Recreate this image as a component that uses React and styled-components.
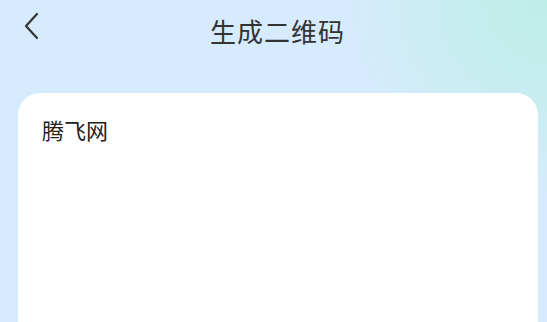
import styled, { createGlobalStyle } from "styled-components"

const Global = createGlobalStyle`
  html, body { margin: 0; padding: 0; }
  body {
    font-family: "Noto Sans CJK SC", "Noto Sans", sans-serif;
    background: #d6ebfd;
  }
`

function App() {
    return (
        <Page>
            <Global />
            <Header>
                <Back aria-label="back">
                    <svg width="16" height="28" viewBox="0 0 16 28">
                        <path d="M13 2 L2 14 L13 26" fill="none" stroke="#333" strokeWidth="2.2" strokeLinecap="round" strokeLinejoin="round" />
                    </svg>
                </Back>
                <Title>生成二维码</Title>
            </Header>
            <Card>
                <Content>腾飞网</Content>
            </Card>
        </Page>
    )
}

const Page = styled.div`
  width: 547px;
  height: 322px;
  overflow: hidden;
  display: flex;
  flex-direction: column;
  background:
    radial-gradient(circle at 100% 0%, #bdeee6 0, rgba(189,238,230,0.6) 90px, rgba(214,235,253,0) 200px),
    #d6ebfd;
`

const Header = styled.header`
  position: relative;
  height: 60px;
  display: flex;
  align-items: center;
  justify-content: center;
`

const Back = styled.button`
  position: absolute;
  left: 24px;
  top: 12px;
  padding: 0;
  border: none;
  background: none;
  display: flex;
`

const Title = styled.h1`
  margin: 0;
  font-size: 26px;
  font-weight: 400;
  color: #333;
  letter-spacing: 1px;
  margin-left: 8px;
`

const Card = styled.section`
  margin: 33px 9px 0 18px;
  flex: 1;
  background: #fff;
  border-radius: 22px 22px 0 0;
  padding: 21px 24px;
`

const Content = styled.p`
  margin: 0;
  font-size: 22px;
  color: #222;
  line-height: 30px;
`

export default App
